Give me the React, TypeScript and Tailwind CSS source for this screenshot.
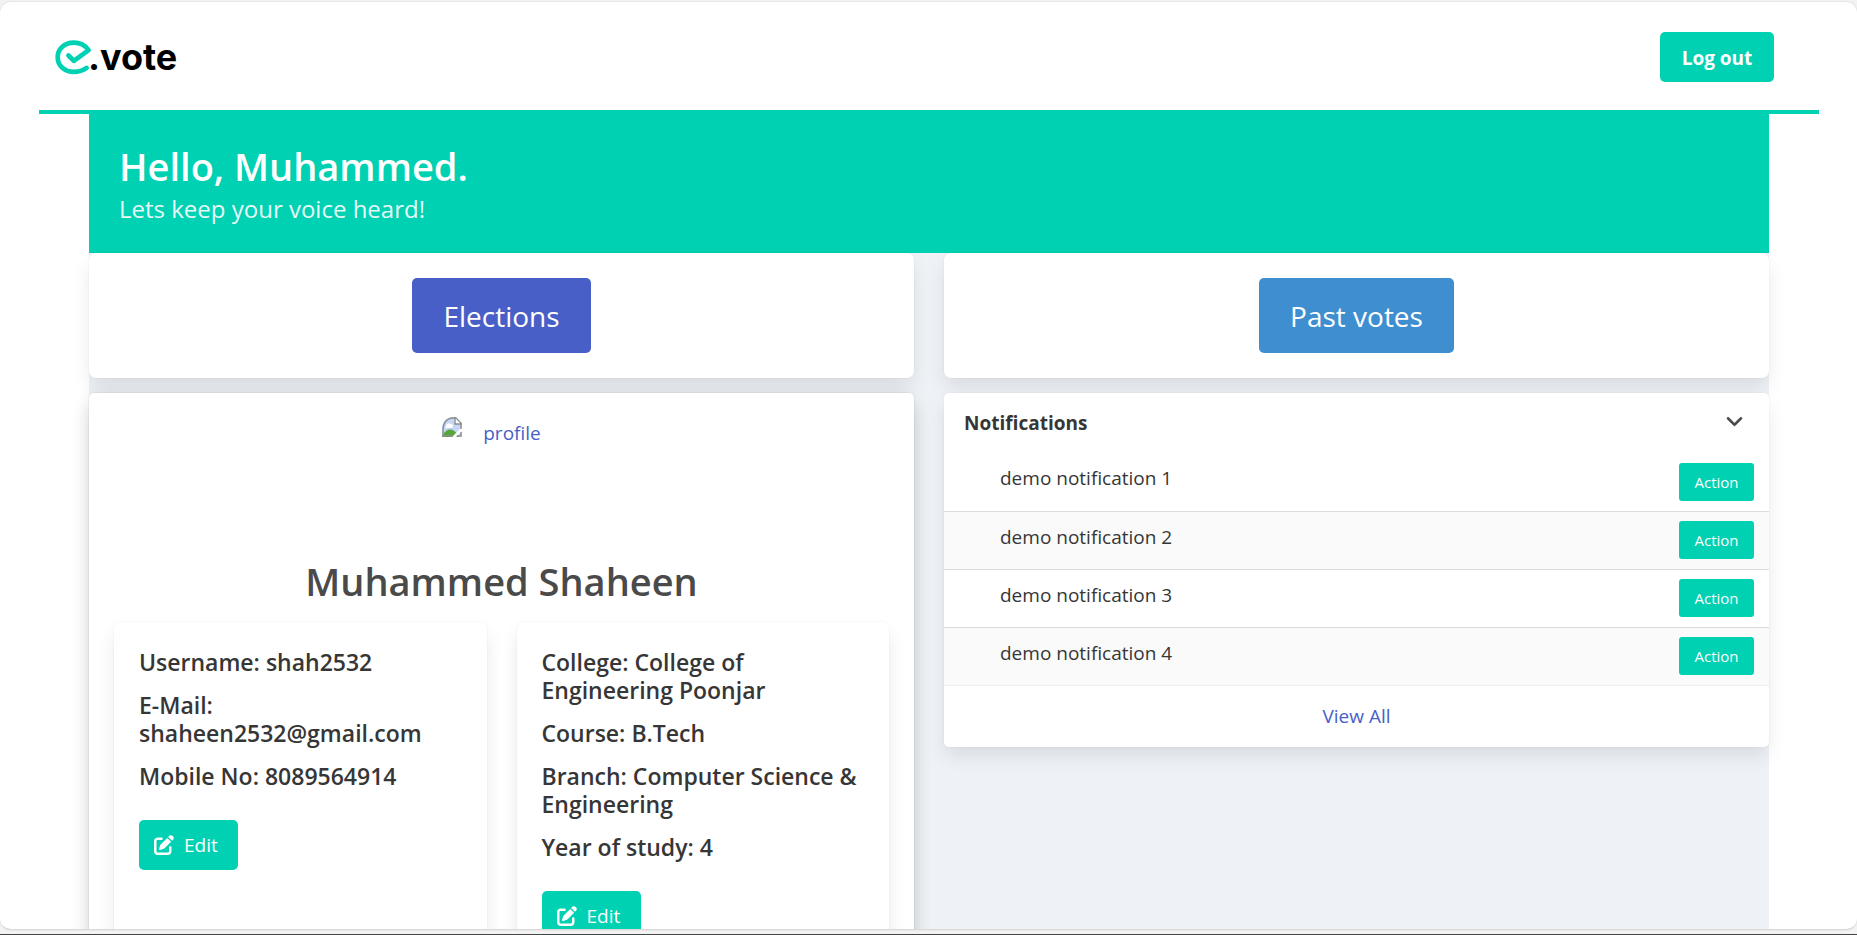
import type { ReactNode } from "react";
import { FaChevronDown, FaPenToSquare } from "react-icons/fa6";

const BOX_SHADOW =
  "shadow-[0_10px_20px_-2px_rgba(10,10,10,0.1),0_0_0_1px_rgba(10,10,10,0.02)]";

function Logo() {
  return (
    <a href="#home" className="flex items-center text-black" aria-label="e.vote">
      <svg viewBox="44 30 108 104" className="h-[35px] w-[37px] shrink-0" fill="none">
        <path
          d="M83 76 L99 92 L143 60 C131 44 116 38 99 38 C70 38 51 57 51 81 C51 107 72 125 99 125 C115 125 126 121 137 113"
          stroke="#00d1b2"
          strokeWidth="14"
          strokeLinecap="round"
          strokeLinejoin="round"
        />
      </svg>
      <span className="-ml-1 font-['Inter',sans-serif] text-[36px] leading-[34px] font-bold">
        .vote
      </span>
    </a>
  );
}

function BrokenImage() {
  return (
    <svg viewBox="0 0 20 20" className="size-5" aria-hidden="true">
      <defs>
        <clipPath id="round">
          <path d="M0 20V12C0 5 4 1 10 0h4l6 6v14z" />
        </clipPath>
      </defs>
      <g clipPath="url(#round)">
        <rect width="20" height="20" fill="#c6d6f5" />
        <path d="M4 9a3 3 0 0 1 5-2 2 2 0 0 1 0 4H3z" fill="#fff" />
        <path d="M0 20c3-9 11-10 15-3l2 3z" fill="#57a639" />
        <path d="M10 20 20 10v4l-6 6z" fill="#fff" />
        <path
          d="M1 20V12C1 6 5 1 10 1h3l6 6v5M1 19h10M19 15v4h-4"
          fill="none"
          stroke="#8d8d8d"
          strokeWidth="1.4"
        />
        <path d="M13 0v7h7z" fill="#fff" stroke="#8d8d8d" strokeWidth="1.4" />
      </g>
    </svg>
  );
}

function EditButton() {
  return (
    <button
      type="button"
      className="mt-[15px] flex h-[50px] w-[99px] items-center gap-[10px] rounded-[5px] bg-[#00d1b2] pl-[15px] text-[19px] text-white"
    >
      <FaPenToSquare className="size-5" />
      Edit
    </button>
  );
}

function DetailCard({ lines }: { lines: string[] }) {
  return (
    <section
      className={`flex min-w-0 flex-1 flex-col items-start gap-[15px] rounded-[7px] bg-white px-[25px] pt-[26px] pb-[25px] text-[23px] leading-7 font-semibold text-[#363636] ${BOX_SHADOW}`}
    >
      {lines.map((line) => (
        <p key={line}>{line}</p>
      ))}
      <div className="font-normal">
        <EditButton />
      </div>
    </section>
  );
}

function ActionBox({ children }: { children: ReactNode }) {
  return (
    <div className={`flex justify-center rounded-[7px] bg-white p-[25px] ${BOX_SHADOW}`}>
      {children}
    </div>
  );
}

const notifications = [1, 2, 3, 4];

export default function App() {
  return (
    <div className="flex h-screen flex-col border-b border-[#454545] bg-[#f3f3f3] pt-[2px] pb-1 font-['Open_Sans',sans-serif] text-[19px] text-[#363636]">
      <div className="min-h-0 flex-1 overflow-hidden rounded-[11px] border-b border-[#d9d9d9] bg-white pr-[38px] pl-[39px] shadow-[0_0_2px_rgba(0,0,0,0.15)]">
        <header className="flex h-28 items-center justify-between border-b-4 border-[#00d1b2] pt-[2px] pr-[45px] pl-4">
          <Logo />
          <button
            type="button"
            className="h-[50px] w-[114px] rounded-[5px] bg-[#00d1b2] pt-[2px] font-bold text-white"
          >
            Log out
          </button>
        </header>

        <main className="mx-[50px] min-h-full bg-[#eef2f7]">
          <div className="h-[139px] bg-[#00d1b2] px-[30px] pt-[30px] text-white">
            <h1 className="text-[38px] leading-[45px] font-semibold">Hello, Muhammed.</h1>
            <p className="text-2xl leading-10 opacity-90">Lets keep your voice heard!</p>
          </div>

          <div className="grid grid-cols-2 items-start gap-[30px]">
            <div className="flex flex-col gap-[15px]">
              <ActionBox>
                <button
                  type="button"
                  className="h-[75px] w-[179px] rounded-[5px] bg-[#485fc7] text-[28px] text-white"
                >
                  Elections
                </button>
              </ActionBox>
              <section className="rounded-[5px] bg-white px-[25px] pt-6 pb-[25px] shadow-[0_10px_20px_-2px_rgba(10,10,10,0.18),0_0_20px_-2px_rgba(10,10,10,0.06),0_0_0_1px_rgba(10,10,10,0.04)]">
                <div className="flex h-[137px] justify-center pr-5">
                  <a href="#profile" className="flex h-8 gap-[21px] text-[#485fc7]">
                    <BrokenImage />
                    <span className="leading-8">profile</span>
                  </a>
                </div>
                <h2 className="pb-[13px] text-center text-[38px] leading-[55px] font-semibold text-[#4a4a4a]">
                  Muhammed Shaheen
                </h2>
                <div className="flex gap-[30px]">
                  <DetailCard
                    lines={[
                      "Username: shah2532",
                      "E-Mail: shaheen2532@gmail.com",
                      "Mobile No: 8089564914",
                    ]}
                  />
                  <DetailCard
                    lines={[
                      "College: College of Engineering Poonjar",
                      "Course: B.Tech",
                      "Branch: Computer Science & Engineering",
                      "Year of study: 4",
                    ]}
                  />
                </div>
              </section>
            </div>

            <div className="flex flex-col gap-[15px]">
              <ActionBox>
                <button
                  type="button"
                  className="h-[75px] w-[195px] rounded-[5px] bg-[#3e8ed0] text-[28px] text-white"
                >
                  Past votes
                </button>
              </ActionBox>
              <section className={`overflow-hidden rounded-[5px] bg-white ${BOX_SHADOW}`}>
                <header className="flex h-[60px] items-center justify-between pr-[26px] pl-5">
                  <h2 className="font-bold">Notifications</h2>
                  <button type="button" className="pb-[5px]" aria-label="Collapse notifications">
                    <FaChevronDown
                      className="size-[17px] text-[#4a4a4a]"
                      stroke="currentColor"
                      strokeWidth="20"
                    />
                  </button>
                </header>
                <table className="w-full border-collapse">
                  <tbody>
                    {notifications.map((n) => (
                      <tr
                        key={n}
                        className="h-[58px] border-b border-[#dbdbdb] last:border-[#ededed] even:bg-[#fafafa]"
                      >
                        <td className="pt-[10px] pl-14 align-top leading-[30px]">
                          demo notification {n}
                        </td>
                        <td className="w-[100px] pr-[15px] align-middle">
                          <button
                            type="button"
                            className="ml-auto block h-[38px] w-[75px] rounded-[3px] bg-[#00d1b2] text-[15px] text-white"
                          >
                            Action
                          </button>
                        </td>
                      </tr>
                    ))}
                  </tbody>
                </table>
                <footer>
                  <a
                    href="#notifications"
                    className="flex h-[61px] items-center justify-center text-[#485fc7]"
                  >
                    View All
                  </a>
                </footer>
              </section>
            </div>
          </div>
        </main>
      </div>
    </div>
  );
}
